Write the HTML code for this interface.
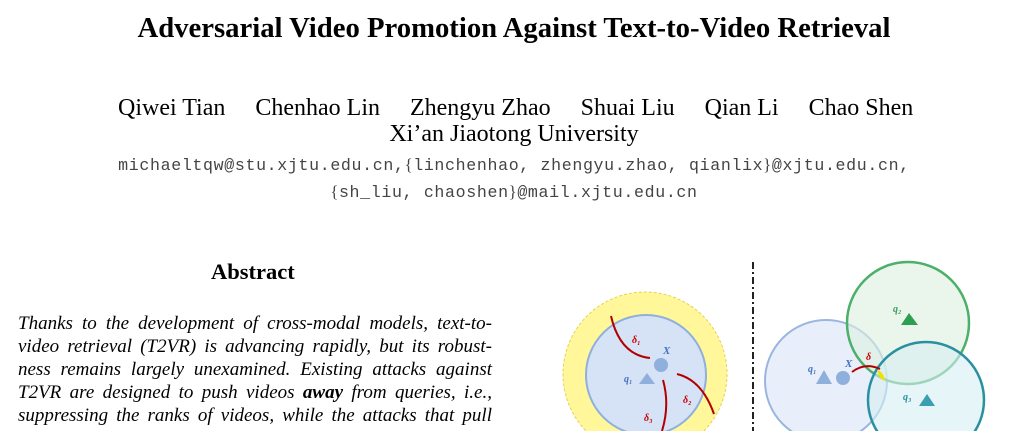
<!DOCTYPE html>
<html><head><meta charset="utf-8"><style>
body{margin:0;width:1028px;height:431px;background:#fff;overflow:hidden;position:relative;font-family:"Liberation Serif",serif;color:#000}
.a{position:absolute;white-space:nowrap}
.c{left:0;width:1028px;text-align:center}
.m{font-family:"Liberation Mono",monospace;font-size:16.6px;letter-spacing:0.65px;color:#444}
.p{position:absolute;left:18px;width:474px;font-style:italic;font-size:19px;line-height:23.3px;text-align:justify;text-align-last:justify;white-space:nowrap}
</style></head><body>
<div class="a c" style="top:12px;font-size:28.7px;font-weight:bold">Adversarial Video Promotion Against Text-to-Video Retrieval</div>
<div class="a" style="top:95px;left:118px;font-size:24px">Qiwei Tian&nbsp;&nbsp;&nbsp;&nbsp; Chenhao Lin&nbsp;&nbsp;&nbsp;&nbsp; Zhengyu Zhao&nbsp;&nbsp;&nbsp;&nbsp; Shuai Liu&nbsp;&nbsp;&nbsp;&nbsp; Qian Li&nbsp;&nbsp;&nbsp;&nbsp; Chao Shen</div>
<div class="a c" style="top:121px;font-size:24px">Xi’an Jiaotong University</div>
<div class="a c m" style="top:155px">michaeltqw@stu.xjtu.edu.cn,<span style="font-family:'Liberation Serif'">{</span>linchenhao, zhengyu.zhao, qianlix<span style="font-family:'Liberation Serif'">}</span>@xjtu.edu.cn,</div>
<div class="a c m" style="top:182px"><span style="font-family:'Liberation Serif'">{</span>sh_liu, chaoshen<span style="font-family:'Liberation Serif'">}</span>@mail.xjtu.edu.cn</div>
<div class="a" style="top:259px;left:211px;font-size:22.5px;font-weight:bold">Abstract</div>
<div class="p" style="top:312px">Thanks to the development of cross-modal models, text-to-</div>
<div class="p" style="top:335px">video retrieval (T2VR) is advancing rapidly, but its robust-</div>
<div class="p" style="top:358px">ness remains largely unexamined. Existing attacks against</div>
<div class="p" style="top:381px">T2VR are designed to push videos <b>away</b> from queries, i.e.,</div>
<div class="p" style="top:404px">suppressing the ranks of videos, while the attacks that pull</div>
<svg class="a" style="left:0;top:0" width="1028" height="431">
<circle cx="645" cy="374" r="82" fill="#fff799" stroke="#e8d24a" stroke-dasharray="3,2"/>
<circle cx="646" cy="375" r="60" fill="#d6e2f5" stroke="#8fb0dc" stroke-width="2"/>
<circle cx="661" cy="365" r="7" fill="#8fb0dc"/>
<polygon points="647,373 639,384 655,384" fill="#8fb0dc"/>
<text x="624" y="382" font-size="10" font-weight="bold" font-style="italic" fill="#4472c4">q₁</text>
<text x="663" y="354" font-size="11" font-weight="bold" font-style="italic" fill="#4472c4">X</text>
<g stroke="#b00000" stroke-width="2" fill="none">
<path d="M650,358 Q620,355 611,316"/><path d="M677,374 Q702,380 714,414"/><path d="M663,380 Q670,405 662,431"/></g>
<text x="632" y="343" font-size="10" font-weight="bold" font-style="italic" fill="#c00">δ₁</text>
<text x="683" y="403" font-size="10" font-weight="bold" font-style="italic" fill="#c00">δ₂</text>
<text x="644" y="421" font-size="10" font-weight="bold" font-style="italic" fill="#c00">δ₃</text>
<line x1="753" y1="262" x2="753" y2="431" stroke="#222" stroke-width="2" stroke-dasharray="7,3,2,3"/>
<circle cx="826" cy="381" r="61" fill="#dfe8f8" fill-opacity=".7" stroke="#9ab6e0" stroke-width="2"/>
<circle cx="908" cy="323" r="61" fill="#dcf0e0" fill-opacity=".6" stroke="#4caf6a" stroke-width="2.5"/>
<circle cx="926" cy="400" r="58" fill="#d6eef2" fill-opacity=".6" stroke="#2a8fa0" stroke-width="2.5"/>
<path d="M877,370 Q884,372 885,381 L880,378 Z" fill="#f4e000"/>
<polygon points="824,370 816,384 832,384" fill="#8fb0dc"/>
<circle cx="843" cy="378" r="7" fill="#8fb0dc"/>
<polygon points="909,313 901,325 918,325" fill="#2e9e4f"/>
<polygon points="927,394 919,406 935,406" fill="#3a9fb0"/>
<text x="808" y="372" font-size="10" font-weight="bold" font-style="italic" fill="#4472c4">q₁</text>
<text x="845" y="367" font-size="11" font-weight="bold" font-style="italic" fill="#4472c4">X</text>
<text x="893" y="312" font-size="10" font-weight="bold" font-style="italic" fill="#3a9f5a">q₂</text>
<text x="903" y="400" font-size="10" font-weight="bold" font-style="italic" fill="#2a8fa0">q₃</text>
<text x="866" y="360" font-size="10" font-weight="bold" font-style="italic" fill="#c00">δ</text>
<path d="M852,372 Q865,362 880,369" stroke="#b00000" stroke-width="2" fill="none"/>
</svg>
</body></html>
